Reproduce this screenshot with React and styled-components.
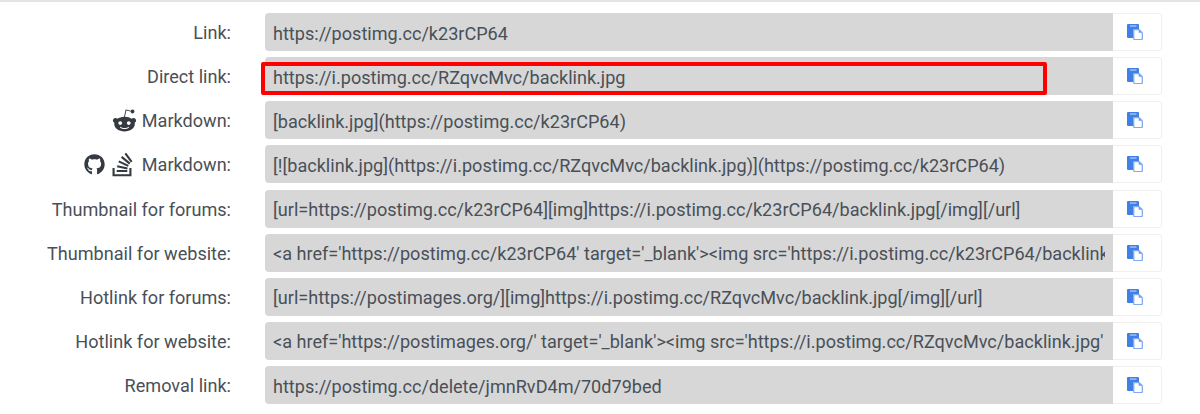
import React from "react";
import styled, { createGlobalStyle } from "styled-components";
import { FaRedditAlien, FaGithub, FaStackOverflow } from "react-icons/fa";

const Global = createGlobalStyle`
  html, body { margin: 0; padding: 0; background: #fff; }
  body { font-family: Roboto, "Liberation Sans", sans-serif; overflow: hidden; }
`;

const Page = styled.div`
  width: 1200px;
  height: 414px;
  box-sizing: border-box;
  border-top: 2px solid #e4e4e4;
  padding-top: 11px;
  display: flex;
  flex-direction: column;
  gap: 6.13px;
`;

const Row = styled.div`
  display: flex;
  height: 38px;
  position: relative;
`;

const Label = styled.label`
  width: 231px;
  margin-right: 34px;
  box-sizing: border-box;
  padding-top: 2px;
  flex: none;
  display: flex;
  justify-content: flex-end;
  align-items: center;
  color: #495057;
  font-size: 18.08px;
  line-height: 24px;
`;

const IconSlot = styled.span`
  display: inline-flex;
  align-items: center;
  color: #343a40;
  font-size: ${(p) => p.$size}px;
  margin-right: ${(p) => p.$gap}px;
  margin-top: -2px;
`;

const Field = styled.input`
  width: 848px;
  height: 38px;
  flex: none;
  box-sizing: border-box;
  background: #d7d7d7;
  border: none;
  outline: none;
  border-radius: 4px 0 0 4px;
  padding: 2px 8px 0;
  margin: 0;
  color: #495057;
  font-family: inherit;
  font-size: 18.08px;
`;

const CopyButton = styled.button`
  width: 49px;
  height: 38px;
  flex: none;
  box-sizing: border-box;
  padding: 0 5px 0 0;
  background: #fff;
  border: 1px solid #f0f0f0;
  border-left: none;
  border-radius: 0 4px 4px 0;
  display: flex;
  align-items: center;
  justify-content: center;
`;

const Highlight = styled.div`
  position: absolute;
  left: 260.5px;
  top: 4.6px;
  width: 786.5px;
  height: 33.4px;
  box-sizing: border-box;
  border: 4px solid #f00;
  border-radius: 2px;
  pointer-events: none;
`;

const CopyIcon = () => (
  <svg width="16" height="16" viewBox="0 0 16 16" aria-hidden="true">
    <path d="M0 1a1 1 0 0 1 1-1h10a1 1 0 0 1 1 1v4H8a2 2 0 0 0-2 2v7H1a1 1 0 0 1-1-1z" fill="#3f7fe8" />
    <rect x="3" y="1.3" width="6.5" height="1.5" fill="#9dbff5" />
    <path d="M6.7 6.6a1 1 0 0 1 1-1h4.4l3.2 3.2v5.9a.9.9 0 0 1-.9.9H7.7a1 1 0 0 1-1-1z" fill="#fff" stroke="#82aaf0" strokeWidth="1.3" />
    <path d="M11.7 5.6v3.2h3.4z" fill="#6f9eea" />
  </svg>
);

const rows = [
  { label: "Link:", value: "https://postimg.cc/k23rCP64" },
  { label: "Direct link:", value: "https://i.postimg.cc/RZqvcMvc/backlink.jpg", marked: true },
  { label: "Markdown:", value: "[backlink.jpg](https://postimg.cc/k23rCP64)", icons: "reddit" },
  { label: "Markdown:", value: "[![backlink.jpg](https://i.postimg.cc/RZqvcMvc/backlink.jpg)](https://postimg.cc/k23rCP64)", icons: "code" },
  { label: "Thumbnail for forums:", value: "[url=https://postimg.cc/k23rCP64][img]https://i.postimg.cc/k23rCP64/backlink.jpg[/img][/url]" },
  { label: "Thumbnail for website:", value: "<a href='https://postimg.cc/k23rCP64' target='_blank'><img src='https://i.postimg.cc/k23rCP64/backlink.jpg' border='0' alt='backlink'/></a>" },
  { label: "Hotlink for forums:", value: "[url=https://postimages.org/][img]https://i.postimg.cc/RZqvcMvc/backlink.jpg[/img][/url]" },
  { label: "Hotlink for website:", value: "<a href='https://postimages.org/' target='_blank'><img src='https://i.postimg.cc/RZqvcMvc/backlink.jpg' border='0' alt='backlink'/></a>" },
  { label: "Removal link:", value: "https://postimg.cc/delete/jmnRvD4m/70d79bed" },
];

export default function App() {
  return (
    <Page>
      <Global />
      {rows.map((r, i) => (
        <Row key={i}>
          <Label>
            {r.icons === "reddit" && (
              <IconSlot $gap={5} $size={25}><FaRedditAlien /></IconSlot>
            )}
            {r.icons === "code" && (
              <>
                <IconSlot $gap={4.5} $size={21}><FaGithub /></IconSlot>
                <IconSlot $gap={5.5} $size={27}><FaStackOverflow /></IconSlot>
              </>
            )}
            {r.label}
          </Label>
          <Field readOnly value={r.value} />
          <CopyButton aria-label="Copy"><CopyIcon /></CopyButton>
          {r.marked && <Highlight />}
        </Row>
      ))}
    </Page>
  );
}
